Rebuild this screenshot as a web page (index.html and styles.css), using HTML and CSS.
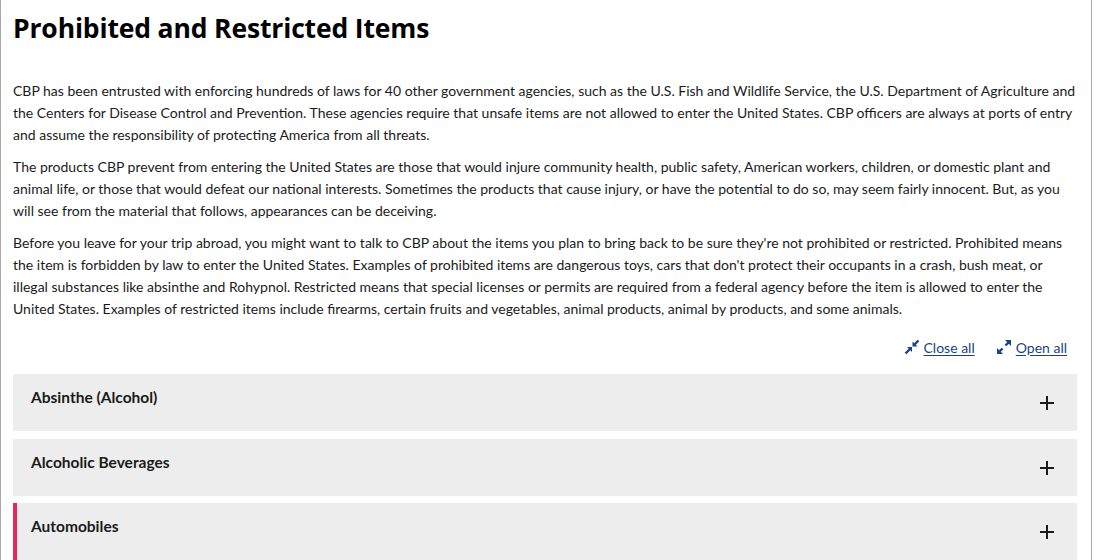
FILE: index.html
```html
<!DOCTYPE html>
<html lang="en">
<head>
<meta charset="utf-8">
<title>Prohibited and Restricted Items</title>
<link rel="stylesheet" href="styles.css">
</head>
<body>
<div class="page">
  <h1 class="title">Prohibited and Restricted Items</h1>
  <div class="intro">
    <p>CBP has been entrusted with enforcing hundreds of laws for 40 other government agencies, such as the U.S. Fish and Wildlife Service, the U.S. Department of Agriculture and the Centers for Disease Control and Prevention. These agencies require that unsafe items are not allowed to enter the United States. CBP officers are always at ports of entry and assume the responsibility of protecting America from all threats.</p>
    <p>The products CBP prevent from entering the United States are those that would injure community health, public safety, American workers, children, or domestic plant and animal life, or those that would defeat our national interests. Sometimes the products that cause injury, or have the potential to do so, may seem fairly innocent. But, as you will see from the material that follows, appearances can be deceiving.</p>
    <p>Before you leave for your trip abroad, you might want to talk to CBP about the items you plan to bring back to be sure they're not prohibited or restricted. Prohibited means the item is forbidden by law to enter the United States. Examples of prohibited items are dangerous toys, cars that don't protect their occupants in a crash, bush meat, or illegal substances like absinthe and Rohypnol. Restricted means that special licenses or permits are required from a federal agency before the item is allowed to enter the United States. Examples of restricted items include firearms, certain fruits and vegetables, animal products, animal by products, and some animals.</p>
  </div>
  <div class="controls">
    <a href="#" class="ctl">
      <svg class="ico" viewBox="0 0 16 16" width="16" height="16"><path d="M1.5 14.5 L6 10" stroke="#1a4480" stroke-width="2.4"/><path d="M3 8 L8 8 L8 13 Z" fill="#1a4480"/><path d="M14.5 1.5 L10.5 5.5" stroke="#1a4480" stroke-width="2.4"/><path d="M8.5 2.5 L8.5 7.5 L13.5 7.5 Z" fill="#1a4480"/></svg>
      <span>Close all</span>
    </a>
    <a href="#" class="ctl">
      <svg class="ico" viewBox="0 0 16 16" width="16" height="16"><path d="M3 13 L6.5 9.5" stroke="#1a4480" stroke-width="2.4"/><path d="M1 9 L1 15 L7 15 Z" fill="#1a4480"/><path d="M9.5 6.5 L13 3" stroke="#1a4480" stroke-width="2.4"/><path d="M9 1 L15 1 L15 7 Z" fill="#1a4480"/></svg>
      <span>Open all</span>
    </a>
  </div>
  <div class="accordion">
    <div class="acc-item"><span class="acc-title">Absinthe (Alcohol)</span><svg class="plus" viewBox="0 0 14 14" width="14" height="14"><path d="M7 0 V14 M0 7 H14" stroke="#1b1b1b" stroke-width="2"/></svg></div>
    <div class="acc-item"><span class="acc-title">Alcoholic Beverages</span><svg class="plus" viewBox="0 0 14 14" width="14" height="14"><path d="M7 0 V14 M0 7 H14" stroke="#1b1b1b" stroke-width="2"/></svg></div>
    <div class="acc-item active"><span class="acc-title">Automobiles</span><svg class="plus" viewBox="0 0 14 14" width="14" height="14"><path d="M7 0 V14 M0 7 H14" stroke="#1b1b1b" stroke-width="2"/></svg></div>
  </div>
</div>
</body>
</html>
```
FILE: styles.css
```css
html, body {
  margin: 0;
  padding: 0;
  background: #fff;
}
body {
  font-family: "Lato", "Liberation Sans", sans-serif;
  color: #1b1b1b;
  height: 560px;
  overflow: hidden;
}
.page {
  width: 1092px;
  min-height: 560px;
  border-left: 1px solid #a9a9a9;
  border-right: 1px solid #a9a9a9;
  padding: 0 14px 0 12px;
  box-sizing: border-box;
}
.title {
  margin: 0;
  padding-top: 11px;
  font-family: "Open Sans", "Noto Sans", sans-serif;
  font-weight: 700;
  font-size: 26.5px;
  line-height: 34px;
  color: #000;
  letter-spacing: -0.15px;
}
.intro {
  margin-top: 35px;
}
.intro p {
  margin: 0 0 10px;
  font-size: 14px;
  line-height: 22px;
}
.controls {
  display: flex;
  justify-content: flex-end;
  gap: 21px;
  padding-right: 10px;
  margin-top: 14px;
  height: 26px;
}
.ctl {
  display: flex;
  align-items: center;
  gap: 4px;
  color: #1a4480;
  font-size: 14px;
  text-decoration: none;
}
.ctl span {
  text-decoration: underline;
  text-underline-offset: 2px;
}
.accordion {
  display: flex;
  flex-direction: column;
  gap: 7.5px;
  margin-top: 14px;
}
.acc-item {
  display: flex;
  align-items: center;
  justify-content: space-between;
  background: #ecedec;
  height: 57px;
  padding: 0 23px 0 18px;
  box-sizing: border-box;
}
.acc-item.active {
  border-left: 4px solid #e8275a;
  padding-left: 14px;
}
.acc-title {
  font-weight: 700;
  font-size: 15.5px;
  margin-top: -11px;
}
.plus {
  margin-top: 1px;
}
```
